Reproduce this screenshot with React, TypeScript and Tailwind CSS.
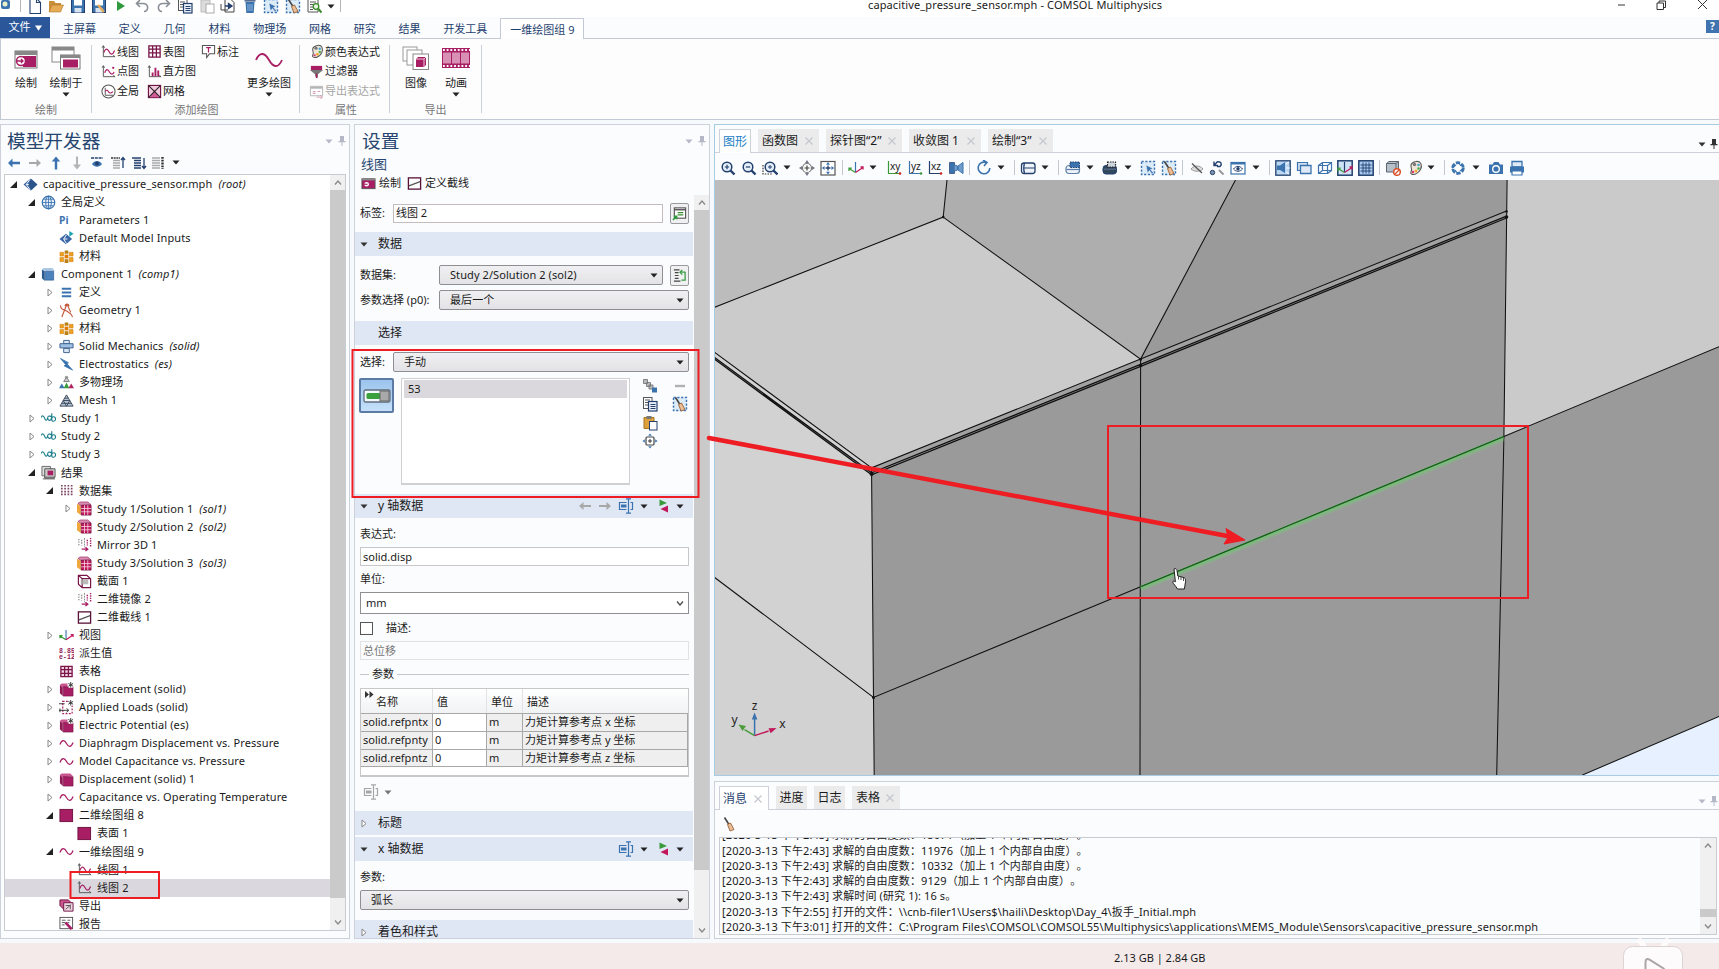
import React from "react";

const M = "#a81e64";
const B = "#3b73af";
const N = "#23406e";

const wave = <path d="M1 9C3 3.500 6 4 8 8s5 4.500 7-1" fill="none" stroke={M} strokeWidth="1.300" />;
const axesMini = <path d="M2.500 2v11.500H15M1.200 4l1.300-2.200L3.800 4M13 12.200l2 1.300" fill="none" stroke="#555" strokeWidth="1" />;
const dashBox = <rect x="1.500" y="1.500" width="13" height="13" fill="#dcebf8" stroke={B} strokeWidth="1.400" strokeDasharray="2.200 1.600" />;
const broom = (
  <>
    <path d="M3.500 1.500L8 8.500" stroke="#444" strokeWidth="1.600" />
    <path d="M6.500 8.500l3-1.500 3.500 6.500-4 1.500z" fill="#e9bd95" stroke="#9a6238" strokeWidth=".9" />
  </>
);
const mag = (
  <>
    <path d="M10.500 10.500l4 4" stroke={N} strokeWidth="2.400" />
    <circle cx="7" cy="7" r="4.800" fill="#e6f0fa" stroke={N} strokeWidth="1.500" />
  </>
);
const cubeM = (
  <>
    <path d="M1 3l3 2.500V15l-3-3z" fill="#8f1a54" />
    <path d="M1 3l2-1.500h9L15 4.500 4 5.500z" fill="#c9568e" />
    <path d="M4.500 5h10.500v10H4.500z" fill={M} stroke="#6f1140" strokeWidth=".6" />
  </>
);
const star = <path d="M12.500 0v6M10 1.500l5 3M15 1.500l-5 3" stroke="#333" strokeWidth="1" />;
const mirror = (
  <>
    <path d="M2 2v8M5 3v6" stroke="#888" strokeWidth="1.300" strokeDasharray="1.500 1.200" />
    <path d="M8 1v10" stroke="#666" strokeWidth=".8" strokeDasharray="2 1" />
    <path d="M11 3v6M14.500 1v9" stroke={M} strokeWidth="1.500" strokeDasharray="1.500 1" />
    <path d="M5 13h6M9 11l2.500 2L9 15" fill="none" stroke={M} strokeWidth="1.400" />
  </>
);
const eye = (
  <>
    <path d="M3.500 9c2.500-3.500 6.500-3.500 9 0-2.500 3-6.500 3-9 0z" fill="#fff" stroke={N} strokeWidth="1" />
    <circle cx="8" cy="8.800" r="1.700" fill={N} />
  </>
);
const palette = (
  <>
    <path d="M9 1.500c5-1 6.500 4 4.500 8-2 3.500-6 6-9 4.500-2.500-1.500 1-3 0-5C3.500 6 3 2.500 9 1.500z" fill="#f0e6d8" stroke="#555" strokeWidth="1.100" />
    <circle cx="7.500" cy="4.500" r="1.700" fill="#777" />
    <circle cx="11.500" cy="5" r="1.300" fill="#3fa7d6" />
    <circle cx="11.500" cy="8.500" r="1.300" fill="#4caf50" />
    <circle cx="9" cy="11" r="1.300" fill="#f2a01e" />
    <circle cx="6" cy="12" r="1.200" fill="#d6336c" />
  </>
);
const axes3 = (c: string) => (
  <>
    <path d="M7.500 2v10" stroke={c} strokeWidth="1.200" />
    <path d="M7.500 12.500L1 8.500M1 11V8.200h2.800" fill="none" stroke="#3a9a3a" strokeWidth="1.300" />
    <path d="M7.500 12.500L15 7.500M12.500 7H15v2.500" fill="none" stroke="#c2185b" strokeWidth="1.300" />
  </>
);
const planeAxes = (t: string, c: string) => (
  <>
    <path d="M2.500 1v12.500H14" fill="none" stroke={c} strokeWidth="1.200" />
    <circle cx="14" cy="13.500" r="1.300" fill={c === B ? "#3a9a3a" : "#c22"} />
    <text x="4" y="9.500" fontSize="10" fontFamily="Noto Sans" fill="#222">{t}</text>
  </>
);
const docs = (
  <>
    <rect x="1.500" y="1.500" width="8.500" height="11" fill="#fff" stroke="#555" />
    <path d="M3 4h5M3 6.500h3M3 9h3" stroke="#555" />
    <rect x="6.500" y="5.500" width="8.500" height="9.500" fill="#e8eef6" stroke={N} strokeWidth="1.200" />
    <path d="M8.500 8.500h5M8.500 10.500h5M8.500 12.500h5" stroke={N} />
  </>
);
const floppy = (
  <>
    <rect x="1.500" y="1.500" width="13" height="13" fill={B} stroke={N} />
    <rect x="4" y="2" width="8" height="5.500" fill="#fff" />
    <rect x="4.500" y="10" width="7" height="4.500" fill="#d7e3f1" />
  </>
);
const material = (
  <>
    <path d="M1 3.500h4v4H1zM1 9h4v4.500H1zM11 3.500h4v4h-4zM11 9h4v4.500h-4z" fill="#f0a020" stroke="#c77a10" strokeWidth=".5" />
    <path d="M6 1.500h4v3.500H6zM6 11h4v4H6z" fill="#b98018" />
    <path d="M6 6h4v4H6z" fill="#e07b00" />
  </>
);
const insertExpr = (c: string) => (
  <>
    <path d="M8.500 4.500H1.500v7h7M12.500 4.500h2v7h-2" fill="none" stroke={c} strokeWidth="1.200" />
    <path d="M3 6.500h5.500v3H3z" fill={c} />
    <path d="M10.500 1v14M8 .8h5M8 15.200h5" stroke={c} strokeWidth="1.200" />
  </>
);
const crosshair = (
  <>
    <rect x="4" y="4" width="8" height="8" rx="1" fill="#fff" stroke="#444" strokeWidth="1.200" />
    <path d="M8 6v4M6 8h4" stroke="#333" />
    <path d="M8 .5L9.800 2.800H6.200zM8 15.500l1.800-2.300H6.200zM.5 8l2.300-1.800v3.600zM15.500 8l-2.300-1.800v3.600z" fill={B} />
  </>
);

const ICONS: Record<string, React.ReactNode> = {
  newdoc: <path d="M3 .5h6.500l4 4v11H3zM9.500.5v4h4" fill="#fff" stroke={N} strokeWidth="1.100" />,
  open: <><path d="M1 14V3h5l1.500 2H13v3" fill="#c98e3a" /><path d="M1 14l3-7h11.500l-3 7z" fill="#e5ab55" stroke="#b07828" strokeWidth=".6" /></>,
  save: floppy,
  saveas: <>{floppy}<path d="M7 7l6 7" stroke="#e5ab55" strokeWidth="2.400" /></>,
  play: <path d="M4 3l8 5-8 5z" fill="#2f9a3c" />,
  undo: <path d="M6 2L2.500 5.500 6 9M2.500 5.500H9c6 0 6 8 1 8" fill="none" stroke="#8a8f96" strokeWidth="1.600" />,
  redo: <path d="M10 2l3.500 3.500L10 9M13.500 5.500H7c-6 0-6 8-1 8" fill="none" stroke="#8a8f96" strokeWidth="1.600" />,
  docs,
  pasteG: <><path d="M2 2h9v12H2z" fill="#ddd" stroke="#bbb" /><rect x="7" y="6" width="8" height="9" fill="#fff" stroke="#aaa" /></>,
  pasteO: <><path d="M2 2.500h10v11H2z" fill="#dca13c" stroke="#a87420" /><path d="M4.500 1h5v3h-5z" fill="#777" /><rect x="7.500" y="6.500" width="7.500" height="8.500" fill="#fff" stroke={N} /></>,
  dup: <><path d="M5 1.500h6l3 3V14H5z" fill="#fff" stroke="#444" /><path d="M1 6v6h7" fill="none" stroke="#444" /><path d="M5 8h6M8.500 5.500L12 8l-3.500 2.500z" fill={N} stroke={N} strokeWidth="1.300" /></>,
  trash: <><path d="M3.500 4h9l-.8 11H4.300z" fill={B} /><path d="M2.500 2.800h11M6 1.200h4" stroke={N} strokeWidth="1.200" /><path d="M6 6v7M8 6v7M10 6v7" stroke="#8fb4dc" strokeWidth="1" /></>,
  select: <>{dashBox}<path d="M6 5l7 3.500-2.500 1L13.500 13l-1.500 1-2.500-3.500L7.500 13z" fill={B} stroke="#fff" strokeWidth=".4" /></>,
  clear: <>{dashBox}{broom}</>,
  find: <><path d="M2 1h10v13H2z" fill="#fff" stroke="#555" /><path d="M4 4h6M4 6.500h3M4 9h3M4 11.500h3" stroke="#555" /><circle cx="10" cy="8.500" r="2.800" fill="#e5f5e0" stroke="#3b8a2e" strokeWidth="1.300" /><path d="M12 10.500l3.500 4" stroke="#3b8a2e" strokeWidth="2" /></>,
  broom,
  line: <>{axesMini}<path d="M3 9c1.500-4 3.500-5 5.500-1s4 4 6-1" fill="none" stroke={M} strokeWidth="1.300" /></>,
  point: <>{axesMini}<path d="M4 9.500c1.500-5 3.500-4 5-1s4 3 5 0" fill="none" stroke={M} strokeWidth="1.200" /><circle cx="13" cy="4" r="1.200" fill={M} /></>,
  global: <><circle cx="8" cy="8" r="7" fill="#fff" stroke="#555" strokeWidth="1.100" /><path d="M4.500 4v8H13" fill="none" stroke="#555" /><path d="M4.500 8c2-3 3 0 4 1s3 1 4-1" fill="none" stroke={M} strokeWidth="1.200" /></>,
  tableplot: <path d="M2 2h12v12H2zM2 5.500h12M2 9.500h12M6 2v12M10 2v12" fill="#fff" stroke="#7a1548" strokeWidth="1.400" />,
  hist: <>{axesMini}<path d="M5 9h2v4H5zM8 4h2v9H8zM11 7h2v6h-2z" fill={M} /></>,
  meshp: <><rect x="1.500" y="1.500" width="13" height="13" fill="#f0c9dc" stroke="#6f1140" strokeWidth="1.200" /><path d="M8 6.500l5 7.500H3z" fill="#d45c96" /><path d="M2 2l12 12M14 2L2 14" fill="none" stroke="#222" strokeWidth="1.100" /></>,
  annot: <><path d="M1.500 1.500h13v9H9l-3 4v-4H1.500z" fill="#fff" stroke="#555" strokeWidth="1.100" /><path d="M5.500 3.800h5M8 4v5" stroke={M} strokeWidth="1.300" /></>,
  palette,
  filter: <><path d="M2 2h12v5H2z" fill={M} /><path d="M1 6.500h14L9.500 11v4l-3-2v-2z" fill="#777" /><path d="M7.300 10h1.500v5H7.300z" fill={M} /></>,
  exportx: <><path d="M1.500 2.500h13v10h-13z" fill="#fff" stroke="#b5b5b5" /><path d="M1.500 4h13" stroke="#b5b5b5" strokeWidth="2" /><path d="M4 8h3M9 8h3M4 10h3" stroke="#d4a0b8" strokeWidth="1.300" /><path d="M8 14h6M12 12l2.500 2-2.500 2" fill="none" stroke="#d4a0b8" /></>,
  larr: <path d="M6.500 3.500L2 8l4.500 4.500V9.300H14V6.700H6.500z" fill={B} />,
  larrG: <path d="M6.500 4L2 8l4.500 4V9.100H14V6.900H6.500z" fill="#a8a8a8" />,
  rarrG: <path d="M9.500 4L14 8l-4.500 4V9.100H2V6.900h7.500z" fill="#a8a8a8" />,
  up: <path d="M8 1.500L3.800 6.500h3V14.500h2.400v-8h3z" fill={B} />,
  downG: <path d="M8 14.500l-4-5h3v-8h2v8h3z" fill="#b4b4b4" />,
  show: <><path d="M2 3h12" stroke={N} strokeWidth="1.600" strokeDasharray="3 .8" /><path d="M3 9c2.500-4 7.500-4 10 0-2.500 3.500-7.500 3.500-10 0z" fill={B} /><circle cx="8" cy="8.500" r="2" fill={N} /></>,
  coll: <><path d="M3 5.500h7M3 8h7M3 10.500h7M3 13h7" stroke="#aaa" strokeWidth="1.300" /><path d="M1 3h9" stroke="#333" strokeWidth="1.300" strokeDasharray="2 .7" /><path d="M13 13V3M11 5l2-2.500 2 2.500" fill="none" stroke={N} strokeWidth="1.300" /></>,
  exp: <><path d="M1 3h9M3 5.500h7M3 8h7M3 10.500h7M3 13h7" stroke={N} strokeWidth="1.400" /><path d="M13 3v10M11 11l2 2.500 2-2.500" fill="none" stroke={N} strokeWidth="1.300" /></>,
  nodes: <><path d="M2 3h8M2 5.500h8M2 8h8M2 10.500h8M2 13h8" stroke="#aaa" strokeWidth="1.500" /><path d="M12.500 2v12" stroke="#333" strokeWidth="2.400" strokeDasharray="1.800 1" /></>,
  root: <><path d="M8 1.500l7.500 6.500L8 14.500.5 8z" fill="#3a66a5" /><path d="M7.500 2.500L3.500 8l4 5.500M3.500 8h5" fill="none" stroke="#fff" strokeWidth="1" /><path d="M9 2l6 6-6 6-3-6z" fill="#2c5488" /></>,
  defin: <><path d="M7.500 3l6.500 5.500L7.500 14 .5 8.500z" fill="#3a66a5" /><path d="M8 4L5 8.500l3 5M5 8.500h4" fill="none" stroke="#fff" /><path d="M11 0l4.500 3L11 6z" fill="#1aa3b0" /></>,
  globe: <><circle cx="8" cy="8" r="6.700" fill="#e9f1fa" stroke={B} strokeWidth="1.300" /><ellipse cx="8" cy="8" rx="3" ry="6.700" fill="none" stroke={B} /><path d="M8 1v14M1.300 8h13.400M2.500 4.500h11M2.500 11.500h11" stroke={B} strokeWidth=".9" /></>,
  pi: <text x="0" y="11.500" fontSize="11" fontWeight="700" fontFamily="Noto Sans" fill={B}>Pi</text>,
  material,
  comp: <><path d="M1 2.500l3 2V15l-3-3z" fill="#2c5a90" /><path d="M1 2.500L3 1h9l3 3H4z" fill="#a9c8e8" /><path d="M4.500 4.500h9V14h-9z" fill="#4b82bd" stroke="#2c5a90" strokeWidth=".7" /></>,
  eq: <path d="M3 4h10M3 8h10M3 12h10" stroke={B} strokeWidth="2" />,
  geom: <path d="M1.500 2.500C2 8 5 6.500 9 9c2.500 1.500 4.500 3 5.500 6M8.500 1L3 15M8.500 1l4 9M6.500 3.500C6.500.5 10.500.5 10.500 3.500" fill="none" stroke="#c4573a" strokeWidth="1.200" />,
  solid: <><path d="M5 1.500h6V5H5zM5 10h6v4.500H5z" fill="#dbe8f6" stroke="#3a5f8c" /><path d="M1 5h14v4.500H1z" fill="#9fc0e3" stroke="#3a5f8c" /></>,
  bolt: <path d="M1.500 1.500L10 6 8.800 7.500 14.500 14 5.500 9.500 7 8z" fill={B} stroke={B} strokeWidth=".8" />,
  multi: <><path d="M8 2l3 5H5z" fill="#ccc" stroke="#777" /><circle cx="8" cy="2.500" r="1.800" fill="#999" /><path d="M0 14l3-5 3 5z" fill="#3b73af" /><path d="M5 14l3-6 3 6z" fill="#3a9a3a" /><path d="M10 14l3-5 3 5z" fill="#b3245f" /></>,
  mesh: <path d="M8 2L1 14h14zM4.500 8h7M8 14L4.500 8M8 14l3.500-6M3 11h10M6 5.500h4" fill="#b9c4d2" stroke="#39485c" strokeWidth="1" />,
  study: <path d="M0 7c1.500-3 3-2 4 1s2.500 2 3-.5.8-2 2.500-2S11.500 7 11 8.500 7.500 11 7.500 8M11.500 2.500v7c0 2 4 2 4-1s-3.500-3-4-.5" fill="none" stroke="#1d7f8c" strokeWidth="1.200" />,
  results: <><path d="M4 3h6l4 4v7H4z" fill="#eee" stroke="#555" /><path d="M1 1.500h9v10H1z" fill="#ddd" stroke="#666" /><path d="M4 4h11v9H4z" fill="#c9c9c9" stroke="#555" /><path d="M7 6h6v5H7z" fill={M} /><path d="M2 14.800h13" stroke="#555" /></>,
  dset: <path d="M3 2v12M6.500 2v12M10 2v12M13.500 2v12" stroke="#7a4560" strokeWidth="1.800" strokeDasharray="1.800 1.300" />,
  sol: <><path d="M0 3l4 2v10l-4-3z" fill="#f0a83c" /><path d="M1 2.500L3.500 1h8L15 4 4.500 5z" fill="#d88ab0" stroke="#8f1a54" strokeWidth=".6" /><path d="M4.500 4.500h10.500v10.500H4.500z" fill="#c2185b" stroke="#6f1140" strokeWidth=".8" /><path d="M4.500 8H15M4.500 11.500H15M8 4.500v10.500M11.500 4.500v10.500" stroke="#f4cfe0" strokeWidth=".9" /></>,
  mirror,
  slice: <><path d="M1.500 1.500h9l4 3.500v9.500h-9l-4-3.500zM1.500 1.500l4 3.500h9M5.500 5v9.500" fill="none" stroke="#7a1548" strokeWidth="1.300" /><path d="M4 6h8v5H4z" fill="#a9a9a9" opacity=".8" /></>,
  cut: <><rect x="1.500" y="2" width="13" height="12" fill="#fff" stroke="#5a1238" strokeWidth="1.400" /><path d="M2 10.500l12-4.500" stroke="#555" strokeWidth="1.300" /></>,
  axes: axes3("#3b73af"),
  derived: <><text x="0" y="7.500" fontSize="7" fontWeight="700" fontFamily="Liberation Mono" fill="#8f1a54">8.85</text><text x="0" y="14" fontSize="7" fontWeight="700" fontFamily="Liberation Mono" fill="#8f1a54">e-12</text></>,
  tableM: <path d="M2 2.500h12v11H2zM2 6h12M2 10h12M6 2.500v11M10 2.500v11" fill="#f3d5e3" stroke="#7a1548" strokeWidth="1.400" />,
  cubeStar: <>{cubeM}<circle cx="12.500" cy="3" r="3.500" fill="#fff" />{star}</>,
  cubeM,
  loads: <><path d="M4 1.500h10v13H4z" fill="none" stroke={M} strokeWidth="1.300" strokeDasharray="2 1.500" /><path d="M0 4h6M0 11h10M8 9l2.500 2L8 13M1 9v4" fill="none" stroke="#333" /><circle cx="12.500" cy="3" r="3.300" fill="#fff" />{star}</>,
  wave,
  sq: <rect x="1" y="1.500" width="13.500" height="13" fill={M} stroke="#6f1140" />,
  exportN: <><path d="M1 2h9l3 3v7H5L1 8z" fill="#c9568e" stroke="#6f1140" /><path d="M5 5h10v9H5z" fill="#f0d5e2" stroke="#6f1140" /><path d="M7 12l6-5M7 8h5v4" fill="none" stroke="#555" /></>,
  report: <><rect x="1" y="1.500" width="13.500" height="12" fill="#fff" stroke="#555" /><path d="M3 4.500h4M3 7h4M3 9.500h3M9 4.500h3M9 7h2" stroke="#555" /><path d="M7 7l6.500 7" stroke={M} strokeWidth="2.800" /></>,
  plot: <><rect x="1" y="3" width="14" height="10.500" fill={M} stroke="#555" /><path d="M1 3.800h14" stroke="#888" strokeWidth="1.800" /><circle cx="6" cy="8.800" r="2.500" fill="#fff" /><path d="M3 8.800h4" stroke={M} strokeWidth="1.200" /></>,
  gotoL: <><rect x="2.500" y="2" width="12" height="11" fill="#fff" stroke="#555" strokeWidth="1.200" /><path d="M2.500 4h12" stroke="#555" strokeWidth="1.500" /><path d="M6 7h6M6 9.500h6" stroke="#3b8a2e" strokeWidth="1.300" /><path d="M1 15l4-4M2 11h3v3" fill="none" stroke="#2f9a3c" strokeWidth="1.600" /></>,
  gotoD: <><path d="M2 2h6M3 5h4M3 8h4M3 11h4M2 14h7" stroke="#444" strokeWidth="1.300" /><path d="M14 4v9h-4M14 4.500h-4M11 2L8.500 4.500 11 7" fill="none" stroke="#2f9a3c" strokeWidth="1.300" /></>,
  zsel: <><path d="M1.500 1.500h4v4h-4zM4.500 4.500h4v4h-4zM7 7h4v4H7z" fill="#bbb" stroke="#777" strokeWidth=".9" /><path d="M10 9.500h5v5h-5z" fill={B} /></>,
  minus: <path d="M3 8h10" stroke="#b0b0b0" strokeWidth="2.400" />,
  crosshair,
  insertB: insertExpr(B),
  insertG: insertExpr("#a5a5a5"),
  replace: <><path d="M3.500 1.500l7.500 3.500-7.500 3z" fill="#3a9a3a" /><path d="M12 7.500v7L4.500 11z" fill="#c2185b" /></>,
  zin: <>{mag}<path d="M4.800 7h4.400M7 4.800v4.400" stroke={N} strokeWidth="1.200" /></>,
  zout: <>{mag}<path d="M4.800 7h4.400" stroke={N} strokeWidth="1.200" /></>,
  zbox: <><path d="M1 5v9h10" fill="none" stroke="#333" strokeDasharray="1.500 1.200" strokeWidth="1.200" /><g transform="translate(1 0)">{mag}<path d="M5 7h4M7 5v4" stroke={N} /></g></>,
  extent: <><circle cx="8" cy="8" r="4.500" fill="#fff" stroke="#777" strokeWidth="1.200" /><path d="M8 5.500v5M5.500 8h5" stroke="#444" strokeWidth="1.200" /><path d="M8 0l2 3H6zM8 16l2-3H6zM0 8l3-2v4zM16 8l-3-2v4z" fill="#778" /></>,
  fit: <><rect x="1" y="1.500" width="14" height="13.500" fill="#fff" stroke="#555" strokeWidth="1.200" /><path d="M8 2l2 2.800H6zM8 14.500l2-2.800H6zM1.800 8l2.800-2v4zM14.200 8l-2.800-2v4z" fill={B} /><path d="M8 5.500v5M5.500 8h5" stroke={N} strokeWidth="1.300" /></>,
  xy: planeAxes("xy", "#3a9a3a"),
  yz: planeAxes("yz", B),
  xz: planeAxes("xz", N),
  persp: <><path d="M1.500 2.500h5v11h-5z" fill={B} stroke={N} strokeWidth=".7" /><path d="M6.500 5l3 1v4l-3 1M10 6l5-3.500v11L10 10z" fill="#6f9dcb" stroke={B} /></>,
  rotate: <path d="M10 2.500A5.800 5.800 0 1 0 13.800 8M7 0l4 2.500L8 6" fill="none" stroke={B} strokeWidth="1.600" />,
  clip: <><rect x="1.500" y="3" width="13.500" height="10.500" rx="2.500" fill="#eef3f9" stroke={N} strokeWidth="1.300" /><path d="M4.500 3c-1 3-1 7 0 10.500M4 8h11" fill="none" stroke={N} strokeWidth="1.200" /></>,
  selobj: <><rect x="1" y="5.500" width="13.500" height="8" rx="3" fill="#eef3f9" stroke="#5d7ea6" strokeWidth="1.200" /><path d="M1.500 9.500h13" stroke="#5d7ea6" strokeWidth="1.200" /><path d="M5 2h9.500v5.500H5z" fill={B} stroke={N} strokeDasharray="1.500 1" /></>,
  seldark: <><rect x="1" y="5.500" width="13.500" height="8.500" rx="3" fill="#31475f" stroke={N} /><path d="M2 9.200h12" stroke="#6c8199" strokeWidth=".8" /><path d="M5.500 2h8v5h-8z" fill="#cfd6de" stroke="#222" strokeWidth="1.200" strokeDasharray="1.500 1" /></>,
  hide: <><path d="M2 9c3-4 9-4 12 0-3 3-9 3-12 0z" fill="#ddd" stroke="#999" /><path d="M3 3.500l10 9.500" stroke="#555" strokeWidth="1.300" /></>,
  reset: <><path d="M5.500 5L8 2c4-1 5.500 2 3 4.500H8M5 1.500v4h4" fill="none" stroke={N} strokeWidth="1.400" /><circle cx="3.500" cy="12.500" r="2.200" fill="#7d93ad" stroke={N} /><path d="M10 10l4.500 4.500" stroke="#999" strokeWidth="2" /></>,
  view: <><rect x="1" y="2.500" width="14" height="11.500" fill="#fff" stroke={B} strokeWidth="1.200" /><path d="M1 3.500h14" stroke={B} strokeWidth="2" />{eye}</>,
  light: <><rect x=".8" y=".8" width="14.400" height="14.400" fill="#b9d6f2" stroke={N} strokeWidth="1.300" /><path d="M2 5.500h3l5-3.500v11L5 10H2z" fill={B} /><path d="M11 8h4M11 4l3-2M11 12l3 2" stroke="#fff" /></>,
  transp: <><path d="M1.500 2.500h10v8h-10z" fill="#cfe0f0" stroke={B} strokeWidth="1.200" /><path d="M4.500 5.500h10.500v8H4.500z" fill="#dfeaf6" stroke={B} strokeWidth="1.300" /></>,
  wire: <path d="M1.500 5.500h9v8h-9zM5.500 2.500h9v8h-9zM1.500 5.500l4-3M10.500 5.500l4-3M10.500 13.500l4-3M1.500 13.500l4-3" fill="none" stroke={B} strokeWidth="1.200" />,
  axesOn: <><rect x=".8" y=".8" width="14.400" height="14.400" fill="#cfe3f7" stroke={N} strokeWidth="1.500" />{axes3(N)}</>,
  gridOn: <><rect x=".8" y=".8" width="14.400" height="14.400" fill="#a9cbee" stroke={N} strokeWidth="1.500" /><path d="M2.500 5h11M2.500 8h11M2.500 11h11M5 2.500v11M8 2.500v11M11 2.500v11" stroke={N} strokeWidth=".9" /></>,
  cubeNo: <><path d="M1.500 3.500L4 1.500h9.500v8L11 12H1.500zM1.500 3.500h9.500V12M11 3.500l2.500-2" fill="#b7bfc9" stroke="#5c6673" /><circle cx="12" cy="12" r="3.300" fill="#fff" stroke="#d9532c" strokeWidth="1.500" /><path d="M10 14l4-4" stroke="#d9532c" strokeWidth="1.300" /></>,
  shutter: <><circle cx="8" cy="8" r="5.300" fill="none" stroke={B} strokeWidth="2.800" strokeDasharray="4.200 1.350" /><path d="M8 2l3 4M14 8l-4 3M8 14l-3-4M2 8l4-3" stroke={B} strokeWidth="1.100" /></>,
  camera: <><path d="M1 4.500h3.500L6 2h4.500L12 4.500h3V14H1z" fill={B} /><circle cx="8" cy="9" r="3.300" fill={B} stroke="#fff" strokeWidth="1.400" /></>,
  printer: <><path d="M3 1.500h10V7H3z" fill="#dfeaf6" stroke={B} strokeWidth="1.300" /><path d="M1 6.500h14v6H1z" fill={B} /><path d="M3 11h10v4H3z" fill="#fff" stroke={B} strokeWidth="1.200" /></>,
};

function I({ n, c = "size-4" }: { n: string; c?: string }) {
  return <svg viewBox="0 0 16 16" className={`shrink-0 ${c}`}>{ICONS[n]}</svg>;
}
function Caret({ c = "text-[#222]" }: { c?: string }) {
  return <svg viewBox="0 0 8 5" className={`h-[5px] w-2 shrink-0 ${c}`}><path d="M.5.5h7L4 4.500z" fill="currentColor" /></svg>;
}
function Pin({ c = "text-[#b4b8c6]" }: { c?: string }) {
  return <svg viewBox="0 0 8 10" className={`h-2.5 w-2 shrink-0 ${c}`}><path d="M2 0h4v5h1.500v1.200H4.500V10h-1V6.200H.5V5H2z" fill="currentColor" /></svg>;
}
function Chev({ up = false, w = "w-[15px]" }: { up?: boolean; w?: string }) {
  return (
    <div className={`flex h-[15px] shrink-0 items-center justify-center bg-[#f0f0f0] ${w}`}>
      <svg viewBox="0 0 8 5" className="h-[5px] w-2"><path d={up ? "M1 4.500l3-3.500 3 3.500" : "M1 .5L4 4 7 .5"} fill="none" stroke="#888" strokeWidth="1.300" /></svg>
    </div>
  );
}
function X() {
  return <svg viewBox="0 0 8 8" className="size-2 shrink-0"><path d="M.5.5l7 7M7.500.5l-7 7" stroke="#c3c5cf" strokeWidth="1.100" /></svg>;
}

type BarItem = [string, string];
function Bar({ items }: { items: BarItem[] }) {
  return (
    <>
      {items.map(([n, m], i) =>
        n === "v" ? <Caret key={i} c={`text-[#222] ${m}`} /> : n === "|" ? <div key={i} className={`h-[15px] w-px shrink-0 bg-[#c4c8cf] ${m}`} /> : <I key={i} n={n} c={`size-4 ${m}`} />
      )}
    </>
  );
}

const QA = ["newdoc", "open", "save", "saveas", "play", "undo", "redo", "docs", "pasteG", "dup", "trash", "select", "clear", "find"];

function TitleBar() {
  return (
    <div className="relative flex h-[17px] shrink-0 items-start bg-white">
      <svg viewBox="0 0 12 12" className="-mt-px ml-0 h-3 w-3"><rect x="1" y="1" width="9" height="9" rx="2" fill={B} /><circle cx="5" cy="5" r="2.500" fill="#e8f0c8" /></svg>
      <div className="ml-2 h-3 w-px bg-[#b5b5b5]" />
      <div className="-mt-[2px] ml-[3px] flex">
        {QA.map((n) => <div key={n} className="flex w-[21.500px] justify-center"><I n={n} /></div>)}
      </div>
      <div className="mt-1 ml-[2px]"><Caret /></div>
      <div className="ml-[5px] h-3 w-px bg-[#b5b5b5]" />
      <div className="absolute -top-[3px] left-[868px] leading-4 tracking-[0.120px]">capacitive_pressure_sensor.mph - COMSOL Multiphysics</div>
      <svg viewBox="0 0 92 12" className="mr-[9px] ml-auto h-3 w-[92px]"><path d="M-3 5H7" stroke="#333" /><path d="M39 3h6.500v6.500H39zM41 3V1h6.500v6.500h-2" fill="none" stroke="#333" /><path d="M80 0l9 9M89 0l-9 9" stroke="#333" /></svg>
    </div>
  );
}

const TABS = ["主屏幕", "定义", "几何", "材料", "物理场", "网格", "研究", "结果", "开发工具"];
function RibbonTabs() {
  return (
    <div className="flex h-[22px] shrink-0 items-stretch border-b border-[#c3cad5] bg-[#fafcfe] text-[#1f3f6e]">
      <div className="flex h-[21px] w-[50px] items-center justify-center bg-[#2b579a] text-white">文件 <svg viewBox="0 0 8 6" className="ml-1 h-1.5 w-[7px]"><path d="M0 0h8L4 6z" fill="#fff" /></svg></div>
      <div className="ml-[13px] flex items-center gap-[22.800px] pt-1">{TABS.map((t) => <span key={t}>{t}</span>)}</div>
      <div className="mt-px -mb-px ml-[13px] flex w-[84px] items-center justify-center border border-b-0 border-[#c3cad5] bg-white pt-0.5">一维绘图组 9</div>
      <div className="mt-[3px] ml-auto flex size-[13px] items-center justify-center bg-[#3f74b0] text-[10px] font-bold text-white">?</div>
    </div>
  );
}

function Big({ icon, label, caret, w }: { icon: React.ReactNode; label: string; caret?: boolean; w: string }) {
  return (
    <div className={`flex shrink-0 flex-col items-center ${w}`}>
      <div className="flex h-[25px] items-end justify-center">{icon}</div>
      <div className="mt-[5px] leading-4">{label}</div>
      {caret && <div className="mt-0 flex h-1.5 items-center"><Caret /></div>}
    </div>
  );
}
function Small({ n, t, dim }: { n: string; t: string; dim?: boolean }) {
  return <div className={`flex h-[19.700px] items-center gap-px whitespace-nowrap ${dim ? "text-[#a5a5a5]" : ""}`}><I n={n} c="size-[15px]" />{t}</div>;
}
function Group({ label, w, lab = "", children }: { label: string; w: string; lab?: string; children: React.ReactNode }) {
  return (
    <div className={`flex h-[68px] shrink-0 flex-col border-r border-[#c9d1dc] ${w}`}>
      <div className="flex h-[57px] shrink-0">{children}</div>
      <div className={`text-center leading-4 text-[#777] ${lab}`}>{label}</div>
    </div>
  );
}
function Ribbon() {
  return (
    <div className="flex h-[81px] shrink-0 items-start border-b border-l border-[#c3cad5] bg-[#fdfdfe] pt-1.5">
      <Group label="绘制" w="w-[91px]">
        <Big w="w-[46px] ml-[2px]" label="绘制" icon={<svg viewBox="0 0 24 20" className="h-5 w-6"><rect x="1" y="1" width="22" height="17" fill="#fff" stroke="#777" /><rect x="1" y="1" width="22" height="4" fill="#888" /><rect x="9" y="6" width="13" height="11" fill={M} /><circle cx="7" cy="11" r="4.500" fill="#fff" stroke={M} strokeWidth="1.500" /><path d="M3 11h6M7 9l2 2-2 2" fill="none" stroke={M} strokeWidth="1.300" /></svg>} />
        <Big w="w-[34px]" caret label="绘制于" icon={<svg viewBox="0 0 30 24" className="h-6 w-[30px]"><rect x="1" y="1" width="22" height="15" fill="#fff" stroke="#888" /><rect x="1" y="1" width="22" height="3.500" fill="#888" /><rect x="9.500" y="9" width="19.500" height="14" fill="#fff" stroke="#777" /><rect x="9.500" y="9" width="19.500" height="3" fill="#888" /><rect x="12" y="13.500" width="15" height="8" fill={M} /></svg>} />
      </Group>
      <Group label="添加绘图" w="w-[208px] pl-[9px]" lab="pr-[7px]">
        <div className="-mt-[3px] w-[46px]"><Small n="line" t="线图" /><Small n="point" t="点图" /><Small n="global" t="全局" /></div>
        <div className="-mt-[3px] w-[54px]"><Small n="tableplot" t="表图" /><Small n="hist" t="直方图" /><Small n="meshp" t="网格" /></div>
        <div className="-mt-[3px] w-[46px]"><Small n="annot" t="标注" /></div>
        <Big w="w-[46px] -ml-px" caret label="更多绘图" icon={<svg viewBox="0 0 28 18" className="mb-px h-[18px] w-7"><path d="M1 9C5 0 10 2 14 9s9 9 13 0" fill="none" stroke={M} strokeWidth="1.800" /></svg>} />
      </Group>
      <Group label="属性" w="w-[90px] pl-[9px]" lab="pr-[6px]">
        <div className="-mt-[3px]"><Small n="palette" t="颜色表达式" /><Small n="filter" t="过滤器" /><Small n="exportx" t="导出表达式" dim /></div>
      </Group>
      <Group label="导出" w="w-[92px] pl-1.5" lab="pr-[6px]">
        <Big w="w-10" label="图像" icon={<svg viewBox="0 0 28 24" className="h-6 w-7"><rect x="1" y="1" width="14" height="14" fill="#fff" stroke="#999" /><rect x="5" y="4" width="15" height="15" fill="#fff" stroke="#999" /><rect x="11" y="8" width="15.500" height="15.500" fill="#fff" stroke="#888" /><path d="M14 13l2-2h8v8l-2 2h-8z" fill={M} /><path d="M14 13h8v8M22 13l2-2" fill="none" stroke="#f1c8dc" /></svg>} />
        <Big w="w-9 ml-[2px]" caret label="动画" icon={<svg viewBox="0 0 28 20" className="mb-0.5 h-5 w-7"><rect x="0" y="0" width="28" height="20" fill={M} /><path d="M1 2h27M1 18h27" stroke="#fff" strokeWidth="1.800" strokeDasharray="1.800 1.900" /><path d="M1 4.500h8v11H1zM10 4.500h8v11h-8zM19 4.500h8v11h-8z" fill="#d890b4" /></svg>} />
      </Group>
    </div>
  );
}

type Row = [number, "o" | "c" | "", string, string, string?];
const ROWS: Row[] = [
  [0, "o", "root", "capacitive_pressure_sensor.mph", "(root)"],
  [1, "o", "globe", "全局定义"],
  [2, "", "pi", "Parameters 1"],
  [2, "", "defin", "Default Model Inputs"],
  [2, "", "material", "材料"],
  [1, "o", "comp", "Component 1", "(comp1)"],
  [2, "c", "eq", "定义"],
  [2, "c", "geom", "Geometry 1"],
  [2, "c", "material", "材料"],
  [2, "c", "solid", "Solid Mechanics", "(solid)"],
  [2, "c", "bolt", "Electrostatics", "(es)"],
  [2, "c", "multi", "多物理场"],
  [2, "c", "mesh", "Mesh 1"],
  [1, "c", "study", "Study 1"],
  [1, "c", "study", "Study 2"],
  [1, "c", "study", "Study 3"],
  [1, "o", "results", "结果"],
  [2, "o", "dset", "数据集"],
  [3, "c", "sol", "Study 1/Solution 1", "(sol1)"],
  [3, "", "sol", "Study 2/Solution 2", "(sol2)"],
  [3, "", "mirror", "Mirror 3D 1"],
  [3, "", "sol", "Study 3/Solution 3", "(sol3)"],
  [3, "", "slice", "截面 1"],
  [3, "", "mirror", "二维镜像 2"],
  [3, "", "cut", "二维截线 1"],
  [2, "c", "axes", "视图"],
  [2, "", "derived", "派生值"],
  [2, "", "tableM", "表格"],
  [2, "c", "cubeStar", "Displacement (solid)"],
  [2, "c", "loads", "Applied Loads (solid)"],
  [2, "c", "cubeStar", "Electric Potential (es)"],
  [2, "c", "wave", "Diaphragm Displacement vs. Pressure"],
  [2, "c", "wave", "Model Capacitance vs. Pressure"],
  [2, "c", "cubeM", "Displacement (solid) 1"],
  [2, "c", "wave", "Capacitance vs. Operating Temperature"],
  [2, "o", "sq", "二维绘图组 8"],
  [3, "", "sq", "表面 1"],
  [2, "o", "wave", "一维绘图组 9"],
  [3, "", "line", "线图 1"],
  [3, "", "line", "线图 2"],
  [2, "", "exportN", "导出"],
  [2, "", "report", "报告"],
];
const INDENT = ["pl-0", "pl-[18px]", "pl-9", "pl-[54px]"];

function Tree() {
  return (
    <div className="flex w-[350px] shrink-0 flex-col border border-[#cdd2da] bg-[#fbfcfe] pl-[3px]">
      <div className="flex h-[30px] items-center pt-0.5 pr-[3px] pl-[3px] text-[18.700px] text-[#27466f]">
        <span className="flex-1">模型开发器</span>
        <Caret c="text-[#b4b8c6]" />
        <span className="ml-[5px]"><Pin /></span>
      </div>
      <div className="mb-1 flex h-[15px] items-center">
        <Bar items={[["larr", "ml-[2px]"], ["rarrG", "ml-[5px]"], ["up", "ml-[5px]"], ["downG", "ml-[5px]"], ["show", "ml-1"], ["coll", "ml-[5px]"], ["exp", "ml-[5px]"], ["nodes", "ml-[3px]"], ["v", "ml-1.5"]]} />
      </div>
      <div className="flex h-[757px] w-[342px] border border-[#c8cbd2] bg-white">
        <div className="min-w-0 flex-1 tracking-[0.120px]">
          {ROWS.map(([lv, st, ic, t, it], i) => (
            <div key={i} className={`flex h-[18.050px] items-center whitespace-nowrap ${INDENT[lv]} ${t === "线图 2" ? "bg-[#dad8de]" : ""}`}>
              <div className="flex w-[17px] shrink-0 justify-center">
                {st === "o" && <svg viewBox="0 0 7 7" className="size-[7px]"><path d="M7 0v7H0z" fill="#222" /></svg>}
                {st === "c" && <svg viewBox="0 0 6 9" className="h-[9px] w-1.5"><path d="M1 1l4 3.500L1 8z" fill="#fff" stroke="#888" /></svg>}
              </div>
              <I n={ic} c="size-[15px] ml-px" />
              <span className="ml-[5px]">{t}</span>
              {it && <span className="ml-1.5 italic">{it}</span>}
            </div>
          ))}
        </div>
        <div className="flex w-[15px] flex-col bg-[#f0f0f0]">
          <Chev up />
          <div className="h-[708px] bg-[#cacaca]" />
          <div className="flex-1" />
          <Chev />
        </div>
      </div>
    </div>
  );
}

function Section({ t, state, c = "h-6", children }: { t: string; state: "o" | "c" | ""; c?: string; children?: React.ReactNode }) {
  return (
    <div className={`flex shrink-0 items-center bg-[#dfe6f4] text-[12px] ${c}`}>
      <div className="ml-1 flex w-[19px] items-center pl-px">
        {state === "o" && <Caret c="text-[#333]" />}
        {state === "c" && <svg viewBox="0 0 6 9" className="ml-px h-[9px] w-1.5"><path d="M1 1l4 3.500L1 8z" fill="#fff" stroke="#888" /></svg>}
      </div>
      <span className="flex-1">{t}</span>
      {children}
    </div>
  );
}
function Select({ t, c }: { t: string; c: string }) {
  return (
    <div className={`flex h-5 items-center justify-between rounded-[2px] border border-[#8f8f93] bg-linear-to-b from-[#f0f0f2] to-[#e3e3e6] pr-1 pl-2.5 tracking-[0.080px] ${c}`}>
      <span>{t}</span><Caret />
    </div>
  );
}
function SqBtn({ n }: { n: string }) {
  return <div className="ml-[7px] flex h-[21px] w-[19px] items-center justify-center rounded-[2px] border border-[#9a9a9e] bg-[#f0f0f2]"><I n={n} c="size-[15px]" /></div>;
}
const PARAMS = ["x", "y", "z"];
const COLS = "grid grid-cols-[72px_54px_36px_1fr]";

function Settings() {
  return (
    <div className="ml-1 flex w-[356px] shrink-0 flex-col border border-[#cdd2da] bg-[#fbfcfe]">
      <div className="flex h-8 shrink-0 items-center pr-[3px] pl-[7px] text-[18.700px] text-[#27466f]">
        <span className="flex-1">设置</span>
        <Caret c="text-[#b4b8c6]" />
        <span className="ml-[5px]"><Pin /></span>
      </div>
      <div className="h-[15px] shrink-0 pl-1.5 text-[13px] leading-[15px] text-[#27466f]">线图</div>
      <div className="flex h-[23px] shrink-0 items-center pb-px pl-1.5">
        <I n="plot" c="size-[15px]" /><span className="ml-[3px]">绘制</span>
        <I n="cut" c="size-[15px] ml-1.5" /><span className="ml-[3px]">定义截线</span>
      </div>
      <div className="flex min-h-0 flex-1">
        <div className="flex w-[338px] shrink-0 flex-col overflow-hidden">
          <div className="flex h-[37px] shrink-0 items-center pl-[5px]">
            <span className="w-[33px]">标签:</span>
            <div className="flex h-[19px] w-[270px] items-center border border-[#c4bcc0] bg-white pl-[2px]">线图 2</div>
            <SqBtn n="gotoL" />
          </div>
          <Section t="数据" state="o" />
          <div className="mt-2 flex h-[22px] shrink-0 items-center pl-[5px]"><span className="w-[79px]">数据集:</span><Select t="Study 2/Solution 2 (sol2)" c="w-[224px]" /><SqBtn n="gotoD" /></div>
          <div className="mt-1 flex h-5 shrink-0 items-center pl-[5px]"><span className="w-[79px]">参数选择 (p0):</span><Select t="最后一个" c="w-[250px]" /></div>
          <Section t="选择" state="" c="mt-[11px] h-6" />
          <div className="mt-[7px] flex h-5 shrink-0 items-center pl-[5px]"><span className="w-[33px]">选择:</span><Select t="手动" c="w-[296px]" /></div>
          <div className="mt-1.5 flex h-[116px] shrink-0 pl-1">
            <div className="flex h-[35px] w-[35px] items-center justify-center rounded-[2px] border-2 border-[#5b7ba5] bg-linear-to-b from-[#9cc4ec] to-[#c5e0fa]">
              <svg viewBox="0 0 28 14" className="h-3.5 w-7"><rect x="1" y="1" width="26" height="12" rx="1.500" fill="#f4f8fc" stroke="#5f6d7d" strokeWidth="1.300" /><rect x="3.500" y="4" width="14" height="6" rx="1.500" fill="#39a03c" /><rect x="17" y="2" width="9" height="10" fill="#a9a9a9" stroke="#666" /></svg>
            </div>
            <div className="ml-[7px] h-[107px] w-[229px] border border-b-2 border-[#d0d0d3] bg-white p-[2px] pt-px"><div className="h-[18px] bg-[#dad8dc] pl-1 leading-[18px]">53</div></div>
            <div className="ml-[12px] flex w-4 flex-col gap-[2.400px]"><I n="zsel" /><I n="docs" /><I n="pasteO" /><I n="crosshair" /></div>
            <div className="ml-[14px] flex w-4 flex-col gap-[2.400px]"><I n="minus" /><I n="clear" /></div>
          </div>
          <Section t="y 轴数据" state="o"><Bar items={[["larrG", ""], ["rarrG", "ml-1"], ["insertB", "ml-[5px]"], ["v", "ml-1.5"], ["replace", "ml-2"], ["v", "ml-1 mr-[9px]"]]} /></Section>
          <div className="flex shrink-0 flex-col pr-1 pl-[5px]">
            <div className="mt-2 h-4 leading-4">表达式:</div>
            <div className="mt-[5px] h-[19px] border border-[#c8c8cb] bg-white pl-[2px] leading-[17px]">solid.disp</div>
            <div className="mt-[5px] h-4 leading-4">单位:</div>
            <div className="mt-[5px] flex h-[22px] items-center justify-between border border-[#8f8f93] bg-white pr-1 pl-[5px]">mm<svg viewBox="0 0 8 5" className="h-[5px] w-2"><path d="M1 .5L4 4 7 .5" fill="none" stroke="#444" strokeWidth="1.200" /></svg></div>
            <div className="mt-1.5 flex h-4 items-center"><div className="size-[13px] border border-[#555] bg-white" /><span className="ml-[13px]">描述:</span></div>
            <div className="mt-[5px] h-[19px] border border-[#e2e2e5] pl-[2px] leading-[17px] text-[#777]">总位移</div>
            <div className="mt-1.5 flex h-4 items-center"><div className="h-px w-[9px] bg-[#c4c8cc]" /><span className="mx-[3px]">参数</span><div className="h-px flex-1 bg-[#c4c8cc]" /></div>
            <div className="mt-1.5 h-[89px] border border-b-2 border-[#c8c8cb] bg-white">
              <div className={`h-[24px] bg-linear-to-b from-white to-[#f0f2f3] ${COLS}`}>
                <div className="flex border-r border-[#e2e2e5]"><svg viewBox="0 0 9 7" className="mt-[2px] ml-[4px] h-[7px] w-[9px]"><path d="M0 0l4 3.500L0 7zM4.500 0l4 3.500-4 3.500z" fill="#333" /></svg><span className="ml-[2px] pt-[5px] leading-4">名称</span></div>
                <div className="border-r border-[#e2e2e5] pt-[5px] pl-1 leading-4">值</div>
                <div className="border-r border-[#e2e2e5] pt-[5px] pl-1 leading-4">单位</div>
                <div className="pt-[5px] pl-1 leading-4">描述</div>
              </div>
              {PARAMS.map((p) => (
                <div key={p} className={`h-[18px] border-t border-[#a8a8a8] bg-[#efefef] leading-4 last:border-b ${COLS}`}>
                  <div className="border-r border-[#a8a8a8] pl-[2px]">solid.refpnt{p}</div>
                  <div className="border-r border-[#a8a8a8] bg-white pl-[2px]">0</div>
                  <div className="border-r border-[#a8a8a8] pl-[2px]">m</div>
                  <div className="border-r border-[#a8a8a8] pl-[2px]">力矩计算参考点 {p} 坐标</div>
                </div>
              ))}
            </div>
            <div className="mt-[7px] flex h-4 items-center pl-[3px]"><I n="insertG" /><Caret c="text-[#777] ml-[5px]" /></div>
          </div>
          <Section t="标题" state="c" c="mt-[11px] h-6" />
          <Section t="x 轴数据" state="o" c="mt-[2px] h-6"><Bar items={[["insertB", ""], ["v", "ml-1.5"], ["replace", "ml-2"], ["v", "ml-1 mr-[9px]"]]} /></Section>
          <div className="mt-2 h-4 shrink-0 pl-[5px] leading-4">参数:</div>
          <div className="mt-[5px] shrink-0 pr-1 pl-[5px]"><Select t="弧长" c="w-full" /></div>
          <Section t="着色和样式" state="c" c="mt-2.5 h-6" />
        </div>
        <div className="ml-auto flex w-[15px] flex-col bg-[#f0f0f0]">
          <Chev up />
          <div className="h-[660px] bg-[#cacaca]" />
          <div className="flex-1" />
          <Chev />
        </div>
      </div>
    </div>
  );
}

const GBAR: BarItem[] = [
  ["zin", "ml-[5px]"], ["zout", "ml-[5px]"], ["zbox", "ml-[5px]"], ["v", "ml-[5px]"], ["extent", "ml-2"], ["fit", "ml-[5px]"], ["|", "ml-1.5"],
  ["axes", "ml-[5px]"], ["v", "ml-[5px]"], ["xy", "ml-[9px]"], ["yz", "ml-[5px]"], ["xz", "ml-[4px]"], ["persp", "ml-[5px]"], ["|", "ml-[5px]"],
  ["rotate", "ml-1.5"], ["v", "ml-[5px]"], ["|", "ml-[9px]"], ["clip", "ml-[5px]"], ["v", "ml-[5px]"], ["|", "ml-[9px]"],
  ["selobj", "ml-1.5"], ["v", "ml-[5px]"], ["seldark", "ml-2"], ["v", "ml-1.5"], ["select", "ml-2"], ["clear", "ml-[5px]"], ["|", "ml-[5px]"],
  ["hide", "ml-1.5"], ["reset", "ml-1"], ["view", "ml-[5px]"], ["v", "ml-1.5"], ["|", "ml-[9px]"],
  ["light", "ml-[5px]"], ["transp", "ml-[5px]"], ["wire", "ml-[5px]"], ["axesOn", "ml-1"], ["gridOn", "ml-[5px]"], ["|", "ml-[5px]"],
  ["cubeNo", "ml-[5px]"], ["palette", "ml-1.5"], ["v", "ml-1"], ["|", "ml-[9px]"], ["shutter", "ml-[5px]"], ["v", "ml-1.5"], ["camera", "ml-2"], ["printer", "ml-[5px]"],
];

function Scene() {
  return (
    <svg viewBox="715 180 1004 595" className="h-[595px] w-[1004px] shrink-0">
      <rect x="715" y="180" width="1004" height="595" fill="#9a9a9a" />
      <path d="M715 180H947L943.700 217.100 715 307z" fill="#bcbcbc" />
      <path d="M947 180H1235.500L1140.600 359 943.700 217.100z" fill="#aeaeae" />
      <path d="M943.700 217.100L1140.600 359 871.600 468 715 352.500V307z" fill="#cbcbcb" />
      <path d="M715 352.500L871.600 468v7l2.600 300H715z" fill="#d2d2d2" />
      <path d="M1507 180H1719V347L1503.900 436z" fill="#cacaca" />
      <path d="M1582.500 775L1719 716.500V775z" fill="#e6f0fe" />
      <path d="M871.600 468L1140.600 359 1506.500 211v6L1140.600 365 871.600 474.500z" fill="#a2a2a2" />
      <g fill="none" stroke="#111" strokeWidth="1.050">
        <path d="M947 180L943.200 217.100 714.300 307.400M943.200 217.100L1140.600 359.100 1235.500 180" />
        <path d="M714.300 352.200L871.600 467.800 1140.600 359.100 1506.500 211" />
        <path d="M714.300 357.300L871.600 472.800 1140.600 364.300 1506.500 216.200M714.300 359L871.600 474.800 1140.600 366.300 1506.500 218" strokeWidth="1.300" />
        <path d="M871.600 467.800V475L873.500 697.400 874.200 775.400M714.300 577.200L873.500 697.400 1140.600 586.800 1503.900 436.400 1719 346.800" />
        <path d="M1140.600 359.100L1140 775M1507.100 180L1503.900 436.400 1496.700 775M1582.500 775L1719 716.500" />
      </g>
      <path d="M1140.600 588.600L1503.900 438.200" stroke="#6fe070" strokeWidth="6" opacity=".25" />
      <path d="M1140.600 588L1503.900 437.600" stroke="#5fce60" strokeWidth="3.200" opacity=".4" />
      <path d="M1140.600 586.800L1503.900 436.400" stroke="#14601a" strokeWidth="1.100" />
      <g fill="#111">
        <circle cx="943.200" cy="217.100" r="1.300" /><circle cx="1140.600" cy="359.500" r="1.400" /><circle cx="1140.600" cy="365.500" r="1.800" />
        <circle cx="871.600" cy="474" r="2" /><circle cx="873.500" cy="697.400" r="1.500" /><circle cx="1506.500" cy="211.500" r="1.300" /><circle cx="1506.500" cy="217" r="1.800" />
      </g>
      <path d="M754.600 735.600V718" stroke={B} strokeWidth="1.500" /><path d="M754.600 712.500l2.800 7h-5.600z" fill={B} />
      <path d="M754.600 735.600l-10-6" stroke="#4a9c3c" strokeWidth="1.500" /><path d="M738.500 724.500l7.500 1.500-3.500 5z" fill="#4a9c3c" />
      <path d="M754.600 735.600l14-4.600" stroke="#c2185b" strokeWidth="1.500" /><path d="M776.500 728l-8 .3 2.200 5z" fill="#c2185b" />
      <g fontFamily="Noto Sans" fontSize="12" fill="#222" textAnchor="middle"><text x="754.600" y="710">z</text><text x="734.500" y="723.500">y</text><text x="782.500" y="728">x</text></g>
    </svg>
  );
}

function GTab({ t, w }: { t: string; w: string }) {
  return <div className={`flex h-[23px] items-center justify-between bg-[#ebebeb] pr-1.5 pl-1 text-[12px] whitespace-nowrap ${w}`}><span>{t}</span><X /></div>;
}

function Graphics() {
  return (
    <div className="flex h-[652px] shrink-0 flex-col border border-r-0 border-[#a6cbe2] bg-[#fbfcfe]">
      <div className="flex h-7 shrink-0 items-end border-b border-[#cdd2da] pl-1">
        <div className="-mb-px flex h-6 w-8 items-center justify-center border border-b-0 border-[#cdd2da] bg-white text-[12px] text-[#1c7fc4]">图形</div>
        <GTab t="函数图" w="w-[61px] ml-[7px]" />
        <GTab t="探针图“2”" w="w-[76px] ml-[7px]" />
        <GTab t="收敛图 1" w="w-[72px] ml-[7px]" />
        <GTab t="绘制“3”" w="w-[65px] ml-[7px]" />
        <div className="mr-px mb-[3px] ml-auto flex items-center gap-1"><Caret c="text-[#333]" /><Pin c="text-[#333]" /></div>
      </div>
      <div className="flex h-[27px] shrink-0 items-center pt-[2px]">
        <Bar items={GBAR} />
      </div>
      <Scene />
    </div>
  );
}

const LOG = [
  "[2020-3-13 下午2:43] 求解的自由度数：15071（加上 1 个内部自由度）。",
  "[2020-3-13 下午2:43] 求解的自由度数：11976（加上 1 个内部自由度）。",
  "[2020-3-13 下午2:43] 求解的自由度数：10332（加上 1 个内部自由度）。",
  "[2020-3-13 下午2:43] 求解的自由度数：9129（加上 1 个内部自由度）。",
  "[2020-3-13 下午2:43] 求解时间 (研究 1): 16 s。",
  "[2020-3-13 下午2:55] 打开的文件：\\\\cnb-filer1\\Users$\\haili\\Desktop\\Day_4\\扳手_Initial.mph",
  "[2020-3-13 下午3:01] 打开的文件：C:\\Program Files\\COMSOL\\COMSOL55\\Multiphysics\\applications\\MEMS_Module\\Sensors\\capacitive_pressure_sensor.mph",
];

function Messages() {
  return (
    <div className="mt-[5px] flex h-[158px] shrink-0 flex-col border border-r-0 border-[#cdd2da] bg-[#fbfcfe]">
      <div className="flex h-7 shrink-0 items-end border-b border-[#cdd2da] pl-1 text-[12px]">
        <div className="-mb-px flex h-6 w-[50px] items-center justify-between border border-b-0 border-[#cdd2da] bg-white pr-1.5 pl-[3px] text-[#1f3f6e]">消息<X /></div>
        <div className="ml-[7px] flex h-[23px] w-[31px] items-center justify-center bg-[#ebebeb]">进度</div>
        <div className="ml-[7px] flex h-[23px] w-[31px] items-center justify-center bg-[#ebebeb]">日志</div>
        <GTab t="表格" w="w-[48px] ml-[7px]" />
        <div className="mr-px mb-[3px] ml-auto flex items-center gap-1"><Caret c="text-[#b4b8c6]" /><Pin /></div>
      </div>
      <div className="flex h-[27px] shrink-0 items-center pl-1.5"><I n="broom" /></div>
      <div className="mr-[2px] ml-1 flex h-[98px] border border-[#c8cbd2]">
        <div className="flex flex-1 flex-col justify-end overflow-hidden tracking-[0.115px] [text-spacing-trim:space-all]">
          {LOG.map((l) => <div key={l} className="h-[15.250px] shrink-0 pl-[2px] leading-[15.250px] whitespace-nowrap">{l}</div>)}
        </div>
        <div className="flex w-4 flex-col bg-[#f0f0f0]">
          <Chev up w="w-4" />
          <div className="flex-1" />
          <div className="mb-[2px] h-2 bg-[#cacaca]" />
          <Chev w="w-4" />
        </div>
      </div>
    </div>
  );
}

function Overlay() {
  return (
    <svg viewBox="0 0 1719 969" className="pointer-events-none absolute top-0 left-0 h-[969px] w-[1719px]">
      <g fill="none" stroke="#ee1c23" strokeWidth="2">
        <rect x="352.500" y="350" width="346" height="147" />
        <rect x="1108" y="426" width="420" height="172" />
        <rect x="70.500" y="872" width="88.500" height="26" />
      </g>
      <path d="M709 438L1230 536.500" stroke="#ee1c23" strokeWidth="4.500" strokeLinecap="round" />
      <path d="M1245 540l-19-11.500 2 9-4 6.500z" fill="#ee1c23" stroke="#ee1c23" />
      <path d="M1174 569c1.500-1 2.800 0 3 1.500l.8 5.500 5.200 1.300c2 .6 2.800 1.500 2.600 4l-1.200 7.700h-7c-1.500-3-4-5-4.800-7 .3-1.200 1.700-1 2.800-.2z" fill="#fff" stroke="#222" />
      <path d="M1178.500 576.500v3M1181 577v3M1183.500 578v3" stroke="#222" strokeWidth=".8" />
      <g>
        <path d="M1640 941l5 7M1667 941l-5 7" stroke="#fdfbfb" strokeWidth="5.500" strokeLinecap="round" />
        <rect x="1623.500" y="946.500" width="59" height="40" rx="9" fill="#fdfbfb" stroke="#ddd3d4" />
        <path d="M1645.500 975v-13c0-3 2-3.500 4-2.300l15 9.300" fill="none" stroke="#aca5a8" strokeWidth="2" />
      </g>
    </svg>
  );
}

export default function App() {
  return (
    <div className="relative flex h-[969px] w-[1719px] flex-col overflow-hidden bg-[#f7fafd] font-['Noto_Sans','Noto_Sans_CJK_SC',sans-serif] text-[11px] text-[#1a1a1a]">
      <TitleBar />
      <RibbonTabs />
      <Ribbon />
      <div className="flex h-[823px] shrink-0 pt-1 pb-1">
        <Tree />
        <Settings />
        <div className="ml-1 flex min-w-0 flex-1 flex-col overflow-hidden">
          <Graphics />
          <Messages />
        </div>
      </div>
      <div className="flex flex-1 items-center bg-[#f4eaea] pt-1 pl-[1114px]">2.13 GB | 2.84 GB</div>
      <Overlay />
    </div>
  );
}
